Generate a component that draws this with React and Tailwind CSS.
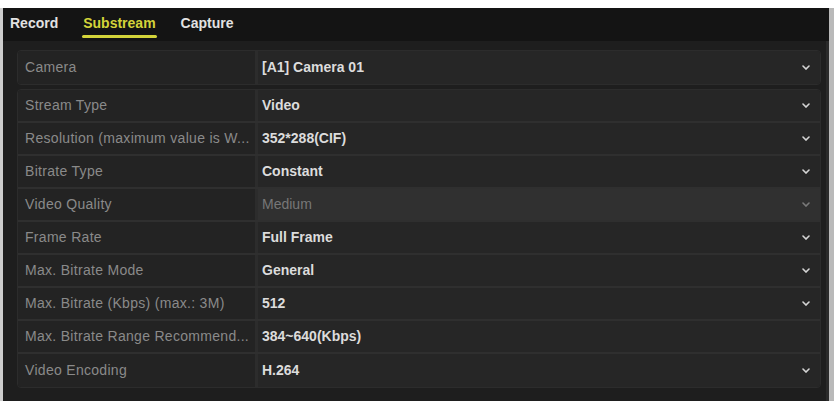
import React from 'react'

const ROWS = [
  { label: 'Stream Type', value: 'Video', arrow: true },
  { label: 'Resolution (maximum value is W...', value: '352*288(CIF)', arrow: true },
  { label: 'Bitrate Type', value: 'Constant', arrow: true },
  { label: 'Video Quality', value: 'Medium', arrow: true, disabled: true },
  { label: 'Frame Rate', value: 'Full Frame', arrow: true },
  { label: 'Max. Bitrate Mode', value: 'General', arrow: true },
  { label: 'Max. Bitrate (Kbps) (max.: 3M)', value: '512', arrow: true },
  { label: 'Max. Bitrate Range Recommend...', value: '384~640(Kbps)', arrow: false },
  { label: 'Video Encoding', value: 'H.264', arrow: true },
]

function Chevron({ dim }) {
  return (
    <svg width="8" height="5" viewBox="0 0 8 5" className={dim ? 'opacity-40' : 'opacity-90'}>
      <path d="M1 1 L4 4 L7 1" fill="none" stroke="#e8e8e8" strokeWidth="1.6" strokeLinecap="round" />
    </svg>
  )
}

function Row({ row, last }) {
  return (
    <div className={`flex h-[33px] ${last ? '' : 'border-b-2 border-[#2f2f2f]'}`}>
      <div className="w-[237px] flex items-center pl-[7px] bg-[#232323] text-[14px] tracking-[0.3px] text-[#8a8a8a] whitespace-nowrap overflow-hidden">
        {row.label}
      </div>
      <div className="w-[3px] bg-[#2c2c2c]" />
      <div
        className={`flex-1 flex items-center justify-between pl-[4px] pr-[10px] text-[14px] ${
          row.disabled ? 'bg-[#303030] text-[#777777] font-normal' : 'bg-[#262626] text-[#dcdcdc] font-bold'
        }`}
      >
        <span>{row.value}</span>
        {row.arrow && <Chevron dim={row.disabled} />}
      </div>
    </div>
  )
}

export default function App() {
  return (
    <div className="w-[834px] h-[401px] bg-white pt-[8px] overflow-hidden" style={{ fontFamily: '"Liberation Sans", Arial, sans-serif' }}>
      <div className="h-[393px] flex border-l-[3px] border-[#cdcdcd]">
        <div className="flex-1 flex flex-col bg-[#1e1e1e]">
          {/* tabs */}
          <div className="h-[33px] bg-[#141414] flex items-end pl-[7px] text-[14px] font-bold gap-[24px]">
            <div className="pb-[7px] text-[#e2e2e2]">Record</div>
            <div className="relative pb-[7px] text-[#d4d43a] px-[1px]">
              Substream
              <div className="absolute left-0 right-0 bottom-[3px] h-[3px] rounded-full bg-[#d4d43a]" />
            </div>
            <div className="pb-[7px] text-[#e2e2e2]">Capture</div>
          </div>

          <div className="flex-1 flex pl-[14px]">
            <div className="flex-1 flex flex-col pt-[9px]">
              <div className="rounded-[4px] overflow-hidden border border-[#2c2c2c]">
                <Row row={{ label: 'Camera', value: '[A1] Camera 01', arrow: true }} last />
              </div>
              <div className="mt-[4px] rounded-[4px] overflow-hidden border border-[#2c2c2c]">
                {ROWS.map((r, i) => (
                  <Row key={r.label} row={r} last={i === ROWS.length - 1} />
                ))}
              </div>
            </div>
            <div className="w-[5px]" />
            <div className="w-[3px] bg-[#2a2a2a]" />
          </div>
        </div>
        <div className="w-[5px] bg-[#b9b9b9]" />
      </div>
    </div>
  )
}
